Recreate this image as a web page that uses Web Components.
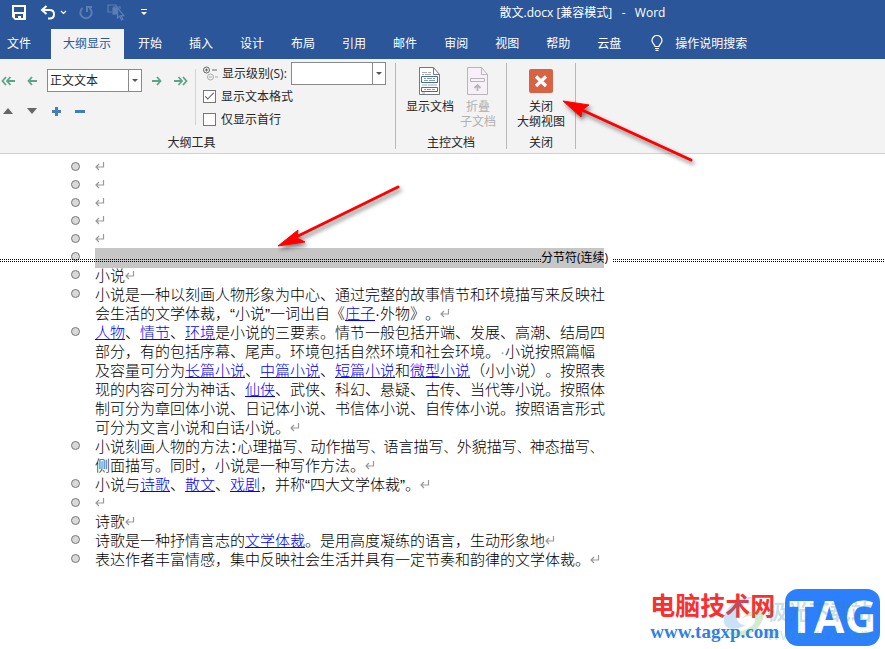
<!DOCTYPE html>
<html lang="zh-CN">
<head>
<meta charset="utf-8">
<title>散文.docx [兼容模式] - Word</title>
<style>
    html, body {
        margin: 0;
        height: 100%;
        overflow: hidden;
        background: #fff;
        color: #262626;
        font: 12px/15px "Open Sans", "Noto Sans CJK SC", sans-serif;
    }
</style>
</head>
<body>
<word-app></word-app>

<script>
class WordTitlebar extends HTMLElement {
    connectedCallback() {
        this.attachShadow({ mode: 'open' });
        this.shadowRoot.innerHTML = `
            <style>
                :host {
                    display: flex;
                    align-items: center;
                    height: 25px;
                    background: #2b579a;
                    color: #fff;
                }

                .quick {
                    display: flex;
                    align-items: center;
                    flex: 0 0 268px;
                    padding-left: 12px;
                }

                button {
                    display: block;
                    padding: 0;
                    border: 0;
                    background: none;
                    color: #fff;
                }

                button:disabled { color: #5c7db4; }
                svg { display: block; }
                .undo { margin-left: 14px; }
                .more { margin-left: 4px; }
                .redo { margin-left: 12px; }
                .touch { margin-left: 14px; }
                .custom { margin-left: 16px; }

                h1 {
                    flex: 1;
                    margin: 0;
                    text-align: center;
                    font-size: 12px;
                    font-weight: 400;
                    white-space: pre;
                }
            </style>

            <div class="quick">
                <button aria-label="保存"><svg width="14" height="15" viewBox="0 0 14 15"><path d="M0 0h14v15H3l-3-3z" fill="#fff"/><path d="M2 2h10v5H2zM3 9h8v4H9v-2H6v2H3z" fill="#2b579a"/></svg></button>
                <button class="undo" aria-label="撤消"><svg width="16" height="15" viewBox="0 0 16 15" fill="none" stroke="currentColor" stroke-width="2"><path d="M6.500 1L2 5l4.500 4M2 5h7.500c3 0 4.500 2 4.500 4.300 0 2.200-1.500 4.200-4.500 4.200H8"/></svg></button>
                <button class="more" aria-label="撤消列表"><svg width="7" height="5" viewBox="0 0 7 5" fill="none" stroke="currentColor" stroke-width="1.200"><path d="M1 1l2.500 2.500L6 1"/></svg></button>
                <button class="redo" aria-label="重复" disabled><svg width="14" height="15" viewBox="0 0 14 15" fill="none" stroke="currentColor" stroke-width="2"><path d="M3.500 3A5.700 5.700 0 1 0 10.500 3M8 7V2h5"/></svg></button>
                <button class="touch" aria-label="选择对象" disabled><svg width="18" height="17" viewBox="0 0 18 17" fill="none" stroke="currentColor" stroke-width="1.200"><path d="M5 8H1V1h8v2M13 5V3H7v7h1"/><path d="M6 4h4v6H6z" fill="currentColor"/><path d="M10.500 4v10l2.300-2 1.700 4 1.400-.7-1.700-3.600h2.800z" fill="#2b579a"/></svg></button>
                <button class="custom" aria-label="自定义快速访问工具栏"><svg width="6" height="7" viewBox="0 0 6 7"><path d="M0 0h6v1H0zM0 3h6L3 6z" fill="currentColor"/></svg></button>
            </div>
            <h1><slot></slot></h1>
        `;
    }
}

class WordTabs extends HTMLElement {
    connectedCallback() {
        const tabs = ['开始', '插入', '设计', '布局', '引用', '邮件', '审阅', '视图', '帮助', '云盘'];
        this.attachShadow({ mode: 'open' });
        this.shadowRoot.innerHTML = `
            <style>
                :host {
                    display: flex;
                    align-items: flex-end;
                    height: 34px;
                    background: #2b579a;
                }

                button {
                    height: 30px;
                    padding: 0 13px 2px 14px;
                    border: 0;
                    background: none;
                    color: #fff;
                    font: inherit;
                    white-space: nowrap;
                }

                .file { padding: 0 20px 2px 7px; }

                .active {
                    padding: 0 13px 2px 12px;
                    background: #f3f3f3;
                    color: #2b579a;
                }

                .tell {
                    display: flex;
                    align-items: center;
                    gap: 12px;
                    padding-left: 17px;
                }
            </style>

            <button class="file">文件</button>
            <button class="active">大纲显示</button>
            ${tabs.map(name => `<button>${name}</button>`).join('')}
            <button class="tell">
                <svg width="12" height="16" viewBox="0 0 12 16" fill="none" stroke="#fff" stroke-width="1.200"><path d="M4 11.500C4 9.500 1 8.500 1 5.500a5 5 0 0 1 10 0c0 3-3 4-3 6zM4 13.500h4M4.500 15.300h3"/></svg>
                操作说明搜索
            </button>
        `;
    }
}

// Drop-down box with the narrow arrow cell on its right
class WordCombo extends HTMLElement {
    connectedCallback() {
        const value = this.getAttribute('value') || '';
        this.attachShadow({ mode: 'open' });
        this.shadowRoot.innerHTML = `
            <style>
                :host {
                    display: grid;
                    grid-template-columns: 1fr 13px;
                    box-sizing: border-box;
                    width: 95px;
                    height: 23px;
                    border: 1px solid #8a8a8a;
                    background: #fff;
                }

                select {
                    grid-area: 1 / 1 / 2 / 3;
                    width: 100%;
                    padding: 0 14px 0 2px;
                    border: 0;
                    appearance: none;
                    background: none;
                    color: #262626;
                    font: inherit;
                }

                .arrow {
                    grid-area: 1 / 2;
                    display: flex;
                    align-items: center;
                    justify-content: center;
                    border-left: 1px solid #8a8a8a;
                    pointer-events: none;
                }
            </style>

            <select aria-label="${this.getAttribute('label')}"><option>${value}</option></select>
            <span class="arrow"><svg width="6" height="3" viewBox="0 0 6 3"><path d="M0 0h6L3 3z" fill="#555"/></svg></span>
        `;
    }
}

class RibbonGroup extends HTMLElement {
    connectedCallback() {
        this.attachShadow({ mode: 'open' });
        this.shadowRoot.innerHTML = `
            <style>
                :host {
                    display: flex;
                    flex-direction: column;
                    box-sizing: border-box;
                    height: 86px;
                    border-right: 1px solid #b8b8b8;
                }

                .body {
                    display: flex;
                    flex: 1;
                }

                .name {
                    height: 15px;
                    line-height: 17px;
                    text-align: center;
                }
            </style>

            <div class="body"><slot></slot></div>
            <div class="name">${this.getAttribute('name')}</div>
        `;
    }
}

class RibbonButton extends HTMLElement {
    connectedCallback() {
        const off = this.hasAttribute('disabled') ? 'disabled' : '';
        this.attachShadow({ mode: 'open' });
        this.shadowRoot.innerHTML = `
            <style>
                :host { display: block; }

                button {
                    display: flex;
                    flex-direction: column;
                    align-items: center;
                    gap: 2px;
                    padding: 2px 0 0;
                    border: 0;
                    background: none;
                    color: #262626;
                    font: inherit;
                    white-space: pre;
                }

                button:disabled { color: #b1b1b1; }

                .icon {
                    display: flex;
                    align-items: center;
                    height: 32px;
                }
            </style>

            <button ${off}><span class="icon"><slot></slot></span><span>${this.getAttribute('text').replace('|', '<br>')}</span></button>
        `;
    }
}

class WordRibbon extends HTMLElement {
    connectedCallback() {
        this.attachShadow({ mode: 'open' });
        this.shadowRoot.innerHTML = `
            <style>
                :host {
                    display: flex;
                    box-sizing: border-box;
                    height: 95px;
                    padding-top: 4px;
                    border-bottom: 1px solid #d2d2d2;
                    background: #f3f3f3;
                }

                svg { display: block; }

                /* the first group starts a little left of the window edge */
                .outline-tools {
                    flex: 0 0 408px;
                    margin-left: -12px;
                }

                .master { flex: 0 0 111px; }
                .close { flex: 0 0 69px; }

                .levels {
                    display: flex;
                    flex-direction: column;
                    gap: 10px;
                    box-sizing: border-box;
                    width: 208px;
                    height: 56px;
                    margin-top: 6px;
                    padding-left: 11px;
                    border-right: 1px solid #d2d2d2;
                }

                .row {
                    display: flex;
                    align-items: center;
                    gap: 6px;
                    min-height: 18px;
                }

                .row button {
                    display: flex;
                    justify-content: center;
                    width: 18px;
                    padding: 0;
                    border: 0;
                    background: none;
                }

                .options {
                    display: flex;
                    flex-direction: column;
                    margin-top: -1px;
                    padding-left: 7px;
                }

                .options .row {
                    gap: 5px;
                    height: 23px;
                    white-space: nowrap;
                }

                .options .row:first-child { gap: 4px; }

                input {
                    display: grid;
                    place-content: center;
                    width: 13px;
                    height: 13px;
                    margin: 0;
                    border: 1px solid #767676;
                    appearance: none;
                    background: #fff;
                }

                input:checked::before {
                    content: "";
                    width: 9px;
                    height: 4px;
                    margin-bottom: 3px;
                    border: solid #555;
                    border-width: 0 0 1px 1px;
                    box-sizing: border-box;
                    transform: rotate(-45deg);
                }

                .big {
                    display: flex;
                    gap: 6px;
                    padding-left: 10px;
                }
            </style>

            <ribbon-group class="outline-tools" name="大纲工具">
                <div class="levels">
                    <div class="row">
                        <button aria-label="提升至标题 1"><svg width="14" height="10" viewBox="0 0 14 10" fill="none" stroke="#5fa489" stroke-width="1.800"><path d="M5 1L1.500 5 5 9M9.500 1L6 5l3.500 4M6 5h8"/></svg></button>
                        <button aria-label="升级"><svg width="10" height="10" viewBox="0 0 10 10" fill="none" stroke="#5fa489" stroke-width="1.800"><path d="M5 1L1.500 5 5 9M1.500 5H10"/></svg></button>
                        <word-combo label="大纲级别" value="正文文本"></word-combo>
                        <button aria-label="降级"><svg width="10" height="10" viewBox="0 0 10 10" fill="none" stroke="#5fa489" stroke-width="1.800"><path d="M5 1l3.500 4L5 9M8.500 5H0"/></svg></button>
                        <button aria-label="降级为正文"><svg width="14" height="10" viewBox="0 0 14 10" fill="none" stroke="#5fa489" stroke-width="1.800"><path d="M9 1l3.500 4L9 9M4.500 1L8 5 4.500 9M8 5H0"/></svg></button>
                    </div>
                    <div class="row">
                        <button aria-label="上移"><svg width="10" height="6" viewBox="0 0 10 6"><path d="M5 0l5 6H0z" fill="#666"/></svg></button>
                        <button aria-label="下移"><svg width="10" height="6" viewBox="0 0 10 6"><path d="M0 0h10L5 6z" fill="#666"/></svg></button>
                        <button aria-label="展开"><svg width="9" height="9" viewBox="0 0 9 9"><path d="M3 0h3v3h3v3H6v3H3V6H0V3h3z" fill="#447dba"/></svg></button>
                        <button aria-label="折叠"><svg width="10" height="3" viewBox="0 0 10 3"><path d="M0 0h10v3H0z" fill="#447dba"/></svg></button>
                    </div>
                </div>
                <div class="options">
                    <div class="row">
                        <svg width="15" height="15" viewBox="0 0 15 15" fill="none" stroke="#666"><circle cx="3.500" cy="4" r="3"/><path d="M2 4h3M3.500 2.500v3M9 4h5"/><g stroke="#aaa"><circle cx="7.500" cy="11" r="3"/><path d="M6 11h3M12 11h3"/></g></svg>
                        <span>显示级别(S):</span>
                        <word-combo label="显示级别"></word-combo>
                    </div>
                    <div class="row"><input type="checkbox" id="format" checked><label for="format">显示文本格式</label></div>
                    <div class="row"><input type="checkbox" id="first"><label for="first">仅显示首行</label></div>
                </div>
            </ribbon-group>

            <ribbon-group class="master" name="主控文档">
                <div class="big">
                    <ribbon-button text="显示文档"><svg width="22" height="28" viewBox="0 0 22 28" fill="none"><path d="M.5.500h14l6 7v20H.5z" fill="#fff" stroke="#777"/><path d="M14.500.500v7h6" stroke="#777"/><path d="M3 5.500h5m1 0h3M3 7.500h2m1 0h6M3 18h5m1 0h9M3 26h3" stroke="#aaa"/><path d="M2.500 9.500h16v6h-16zM2.500 20.500h16v4h-16z" fill="#fff" stroke="#3472b2"/><path d="M5 11.500h2m1 0h5m1 0h2M5 13.500h4m1 0h6M5 22.500h2m1 0h4m1 0h3" stroke="#999"/></svg></ribbon-button>
                    <ribbon-button text="折叠|子文档" disabled><svg width="22" height="28" viewBox="0 0 22 28" fill="none" stroke="#b8b4b9"><path d="M.5.500h14l6 7v20H.5z" fill="#f7f0f8"/><path d="M14.500.500v7h6"/><path d="M3.500 11.500h14v3h-14z"/><path d="M10.500 24v-5M7.500 21l3-3 3 3" stroke-width="1.800"/></svg></ribbon-button>
                </div>
            </ribbon-group>

            <ribbon-group class="close" name="关闭">
                <div class="big">
                    <ribbon-button text="关闭|大纲视图"><svg width="24" height="24" viewBox="0 0 24 24"><rect width="24" height="24" rx="2" fill="#d86344"/><path d="M7 7.500l10 9.500M17 7.500L7 17" stroke="#fff" stroke-width="3.300"/></svg></ribbon-button>
                </div>
            </ribbon-group>
        `;
    }
}

class ReturnMark extends HTMLElement {
    connectedCallback() {
        this.attachShadow({ mode: 'open' });
        this.shadowRoot.innerHTML = `
            <style>
                :host { display: inline-block; }
                svg { display: block; }
            </style>
            <svg width="10" height="10" viewBox="0 0 10 10" fill="none" stroke="#999" stroke-width="1.200"><path d="M8.500 0v5H1M4 2L1 5l3 3"/></svg>
        `;
    }
}

class OutlineParagraph extends HTMLElement {
    connectedCallback() {
        this.attachShadow({ mode: 'open' });
        this.shadowRoot.innerHTML = `
            <style>
                :host {
                    display: grid;
                    grid-template-columns: 24px 1fr;
                    align-items: start;
                    padding-left: 71px;
                    line-height: 19px;
                }

                :host([blank]) { line-height: 18px; }

                i {
                    box-sizing: border-box;
                    width: 9px;
                    height: 9px;
                    margin-top: 4px;
                    border: 1px solid #777;
                    border-radius: 50%;
                    background: #d9d9d9;
                }

                p {
                    margin: 0;
                    white-space: nowrap;
                }
            </style>

            <i></i>
            <p><slot></slot></p>
        `;
    }
}

// Section break: selected line with a dotted rule across the window
class SectionBreak extends HTMLElement {
    connectedCallback() {
        this.attachShadow({ mode: 'open' });
        this.shadowRoot.innerHTML = `
            <style>
                :host {
                    display: grid;
                    grid-template-columns: 71px 24px 509px 1fr;
                    height: 18px;
                }

                i {
                    grid-area: 1 / 2;
                    box-sizing: border-box;
                    width: 9px;
                    height: 9px;
                    margin-top: 4px;
                    border: 1px solid #777;
                    border-radius: 50%;
                    background: #d9d9d9;
                }

                .selected {
                    grid-area: 1 / 3;
                    background: #c6c6c6;
                }

                .rule {
                    grid-area: 1 / 1 / 2 / 5;
                    display: grid;
                    grid-template-columns: 541px 72px 1fr;
                    font: 12px/20px "Open Sans", "Noto Sans CJK SC", sans-serif;
                    color: #000;
                }

                .dots {
                    height: 3px;
                    margin-top: 11px;
                    background: repeating-linear-gradient(90deg, #000 0 1px, transparent 1px 2px) 0 0 / 100% 1px no-repeat,
                                repeating-linear-gradient(90deg, #000 0 1px, transparent 1px 2px) 0 2px / 100% 1px no-repeat;
                }
            </style>

            <i></i>
            <div class="selected"></div>
            <div class="rule"><span class="dots"></span><span><slot></slot></span><span class="dots"></span></div>
        `;
    }
}

class WordDocument extends HTMLElement {
    connectedCallback() {
        this.attachShadow({ mode: 'open' });
        this.shadowRoot.innerHTML = `
            <style>
                :host {
                    display: block;
                    padding-top: 4px;
                    color: #000;
                    font-family: "Liberation Sans", "Noto Sans CJK SC", sans-serif;
                    font-size: 15px;
                    font-weight: 300;
                    text-spacing-trim: space-all;
                }

                a { color: #00f; }
                .space { color: #999; }

                .mark {
                    font-size: 13px;
                    line-height: 1px;
                }

                .half { font-feature-settings: "halt"; }
            </style>

            ${'<outline-paragraph blank><return-mark></return-mark></outline-paragraph>'.repeat(5)}
            <section-break>分节符(连续)</section-break>
            <outline-paragraph>小说<return-mark></return-mark></outline-paragraph>
            <outline-paragraph>小说是一种以刻画人物形象为中心、通过完整的故事情节和环境描写来反映社<br>会生活的文学体裁，“小说”一词出自《<a href="#">庄子</a>·外物》。<return-mark></return-mark></outline-paragraph>
            <outline-paragraph><a href="#">人物</a>、<a href="#">情节</a>、<a href="#">环境</a>是小说的三要素。情节一般包括开端、发展、高潮、结局四<br>部分，有的包括序幕、尾声。环境包括自然环境和社会环境。<span class="space">·</span>小说按照篇幅<br>及容量可分为<a href="#">长篇小说</a>、<a href="#">中篇小说</a>、<a href="#">短篇小说</a>和<a href="#">微型小说</a>（小小说）。按照表<br>现的内容可分为神话、<a href="#">仙侠</a>、武侠、科幻、悬疑、古传、当代等小说。按照体<br>制可分为章回体小说、日记体小说、书信体小说、自传体小说。按照语言形式<br>可分为文言小说和白话小说。<return-mark></return-mark></outline-paragraph>
            <outline-paragraph>小说刻画人物的方法<span class="half">：</span>心理描写<span class="mark">、</span>动作描写<span class="mark">、</span>语言描写<span class="mark">、</span>外貌描写<span class="mark">、</span>神态描写<span class="mark">、</span><br>侧面描写。同时，小说是一种写作方法。<return-mark></return-mark></outline-paragraph>
            <outline-paragraph>小说与<a href="#">诗歌</a>、<a href="#">散文</a>、<a href="#">戏剧</a>，并称“四大文学体裁”。<return-mark></return-mark></outline-paragraph>
            <outline-paragraph blank><return-mark></return-mark></outline-paragraph>
            <outline-paragraph>诗歌<return-mark></return-mark></outline-paragraph>
            <outline-paragraph>诗歌是一种抒情言志的<a href="#">文学体裁</a>。是用高度凝练的语言，生动形象地<return-mark></return-mark></outline-paragraph>
            <outline-paragraph>表达作者丰富情感，集中反映社会生活并具有一定节奏和韵律的文学体裁。<return-mark></return-mark></outline-paragraph>
        `;
    }
}

// Red pointer; its box is placed by the page that uses it
class RedArrow extends HTMLElement {
    connectedCallback() {
        this.attachShadow({ mode: 'open' });
        const left = this.getAttribute('to') === 'bottom-left';
        const head = left ? 'M4 64l20-16-1 8 8 4z' : 'M5 5l26 4-7 5-1 7z';
        const line = left ? 'M22 55L124 5' : 'M24 14L133 64';
        this.shadowRoot.innerHTML = `
            <style>
                :host {
                    display: block;
                    pointer-events: none;
                }

                svg {
                    display: block;
                    filter: drop-shadow(2px 3px 2px rgba(0, 0, 0, 0.5));
                }
            </style>
            <svg width="145" height="76" viewBox="0 0 145 76"><path d="${line}" stroke="#f00" stroke-width="3" stroke-linecap="round"/><path d="${head}" fill="#f00" stroke="#f00"/></svg>
        `;
    }
}

class SiteBadge extends HTMLElement {
    connectedCallback() {
        this.attachShadow({ mode: 'open' });
        this.shadowRoot.innerHTML = `
            <style>
                :host {
                    display: flex;
                    gap: 6px;
                    align-items: center;
                    white-space: nowrap;
                }

                .name {
                    color: #fa3030;
                    font: bold 25px/28px "Noto Sans CJK SC", sans-serif;
                }

                .site {
                    display: block;
                    color: #2f7fe6;
                    font: bold 19px/27px "Liberation Serif", serif;
                    text-decoration: none;
                }

                .tag {
                    width: 95px;
                    height: 57px;
                    border-radius: 13px;
                    background: #2d80fd;
                    color: #fff;
                    font: bold 44px/54px "Open Sans", sans-serif;
                    text-align: center;
                }

                .ghost {
                    position: absolute;
                    right: 4px;
                    top: 8px;
                    display: flex;
                    opacity: 0.25;
                    color: #2f7fa6;
                }

                .ghost b {
                    display: block;
                    font: bold 21px/26px "Noto Sans CJK SC", sans-serif;
                }

                .ghost small {
                    display: block;
                    color: #3aa76a;
                    font: 17px/22px "Open Sans", sans-serif;
                    text-align: right;
                }
            </style>

            <div>
                <div class="name">电脑技术网</div>
                <a class="site" href="#">www.tagxp.com</a>
            </div>
            <div class="tag">TAG</div>
            <div class="ghost">
                <svg width="44" height="42" viewBox="0 0 44 42"><path d="M30 0C13-1 0 13 1 25c1 9 14 8 22 3C11 28 8 12 30 0z" fill="#2f8fe0"/><path d="M3 35c13 10 36 1 38-18-5-6-15-3-22 4 7-3 14-3 13 3-2 8-17 13-29 11z" fill="#50b450"/></svg>
                <div><b>极光下载站</b><small>www.xz7.com</small></div>
            </div>
        `;
    }
}

class WordApp extends HTMLElement {
    connectedCallback() {
        this.attachShadow({ mode: 'open' });
        this.shadowRoot.innerHTML = `
            <style>
                :host {
                    display: block;
                    position: relative;
                    height: 100%;
                }

                red-arrow, site-badge { position: absolute; }
                .to-break { left: 274px; top: 182px; }
                .to-close { left: 558px; top: 96px; }
                site-badge { right: 5px; bottom: 3px; }
            </style>

            <word-titlebar>散文.docx [兼容模式]   -   Word</word-titlebar>
            <word-tabs></word-tabs>
            <word-ribbon></word-ribbon>
            <word-document></word-document>
            <red-arrow class="to-break" to="bottom-left"></red-arrow>
            <red-arrow class="to-close" to="top-left"></red-arrow>
            <site-badge></site-badge>
        `;
    }
}

customElements.define('word-titlebar', WordTitlebar);
customElements.define('word-tabs', WordTabs);
customElements.define('word-combo', WordCombo);
customElements.define('ribbon-group', RibbonGroup);
customElements.define('ribbon-button', RibbonButton);
customElements.define('word-ribbon', WordRibbon);
customElements.define('return-mark', ReturnMark);
customElements.define('outline-paragraph', OutlineParagraph);
customElements.define('section-break', SectionBreak);
customElements.define('word-document', WordDocument);
customElements.define('red-arrow', RedArrow);
customElements.define('site-badge', SiteBadge);
customElements.define('word-app', WordApp);
</script>
</body>
</html>
